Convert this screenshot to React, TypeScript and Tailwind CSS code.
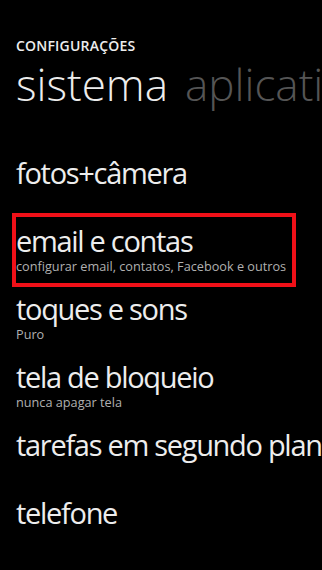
// Settings list (phone) – system pivot
const items: { title: string; subtitle?: string; highlighted?: boolean }[] = [
  { title: 'fotos+câmera' },
  { title: 'email e contas', subtitle: 'configurar email, contatos, Facebook e outros', highlighted: true },
  { title: 'toques e sons', subtitle: 'Puro' },
  { title: 'tela de bloqueio', subtitle: 'nunca apagar tela' },
  { title: 'tarefas em segundo plano' },
  { title: 'telefone' },
  { title: 'rede celular + SIM' },
];

const App = () => {
  return (
    <div
      className="w-[322px] h-[570px] overflow-hidden bg-black text-[#ededed]"
      style={{ fontFamily: '"Open Sans", "Noto Sans", sans-serif' }}
    >
      {/* Header */}
      <div className="pt-[36px] pl-4">
        <div className="text-[14px] leading-[20px] font-semibold tracking-[0.2px]">CONFIGURAÇÕES</div>
        <div className="mt-[2px] flex gap-[17px] whitespace-nowrap text-[44px] leading-[52px] font-light">
          <span>sistema</span>
          <span className="text-[#555555]">aplicativos</span>
        </div>
      </div>

      {/* Items */}
      <div className="mt-[38px] flex flex-col">
        {items.map((item) => (
          <div key={item.title} className="relative h-[68px] pl-4 pt-2 whitespace-nowrap">
            {item.highlighted && (
              <span className="absolute -top-[3px] -bottom-[3px] left-3 w-[284px] border-4 border-[#f01018]" />
            )}
            <div className="text-[29px] leading-[34px] tracking-[-1.3px]">{item.title}</div>
            {item.subtitle && (
              <div className="mt-[1px] text-[12.7px] leading-[14px] text-[#b0b0b0]">{item.subtitle}</div>
            )}
          </div>
        ))}
      </div>
    </div>
  );
};

export default App;
